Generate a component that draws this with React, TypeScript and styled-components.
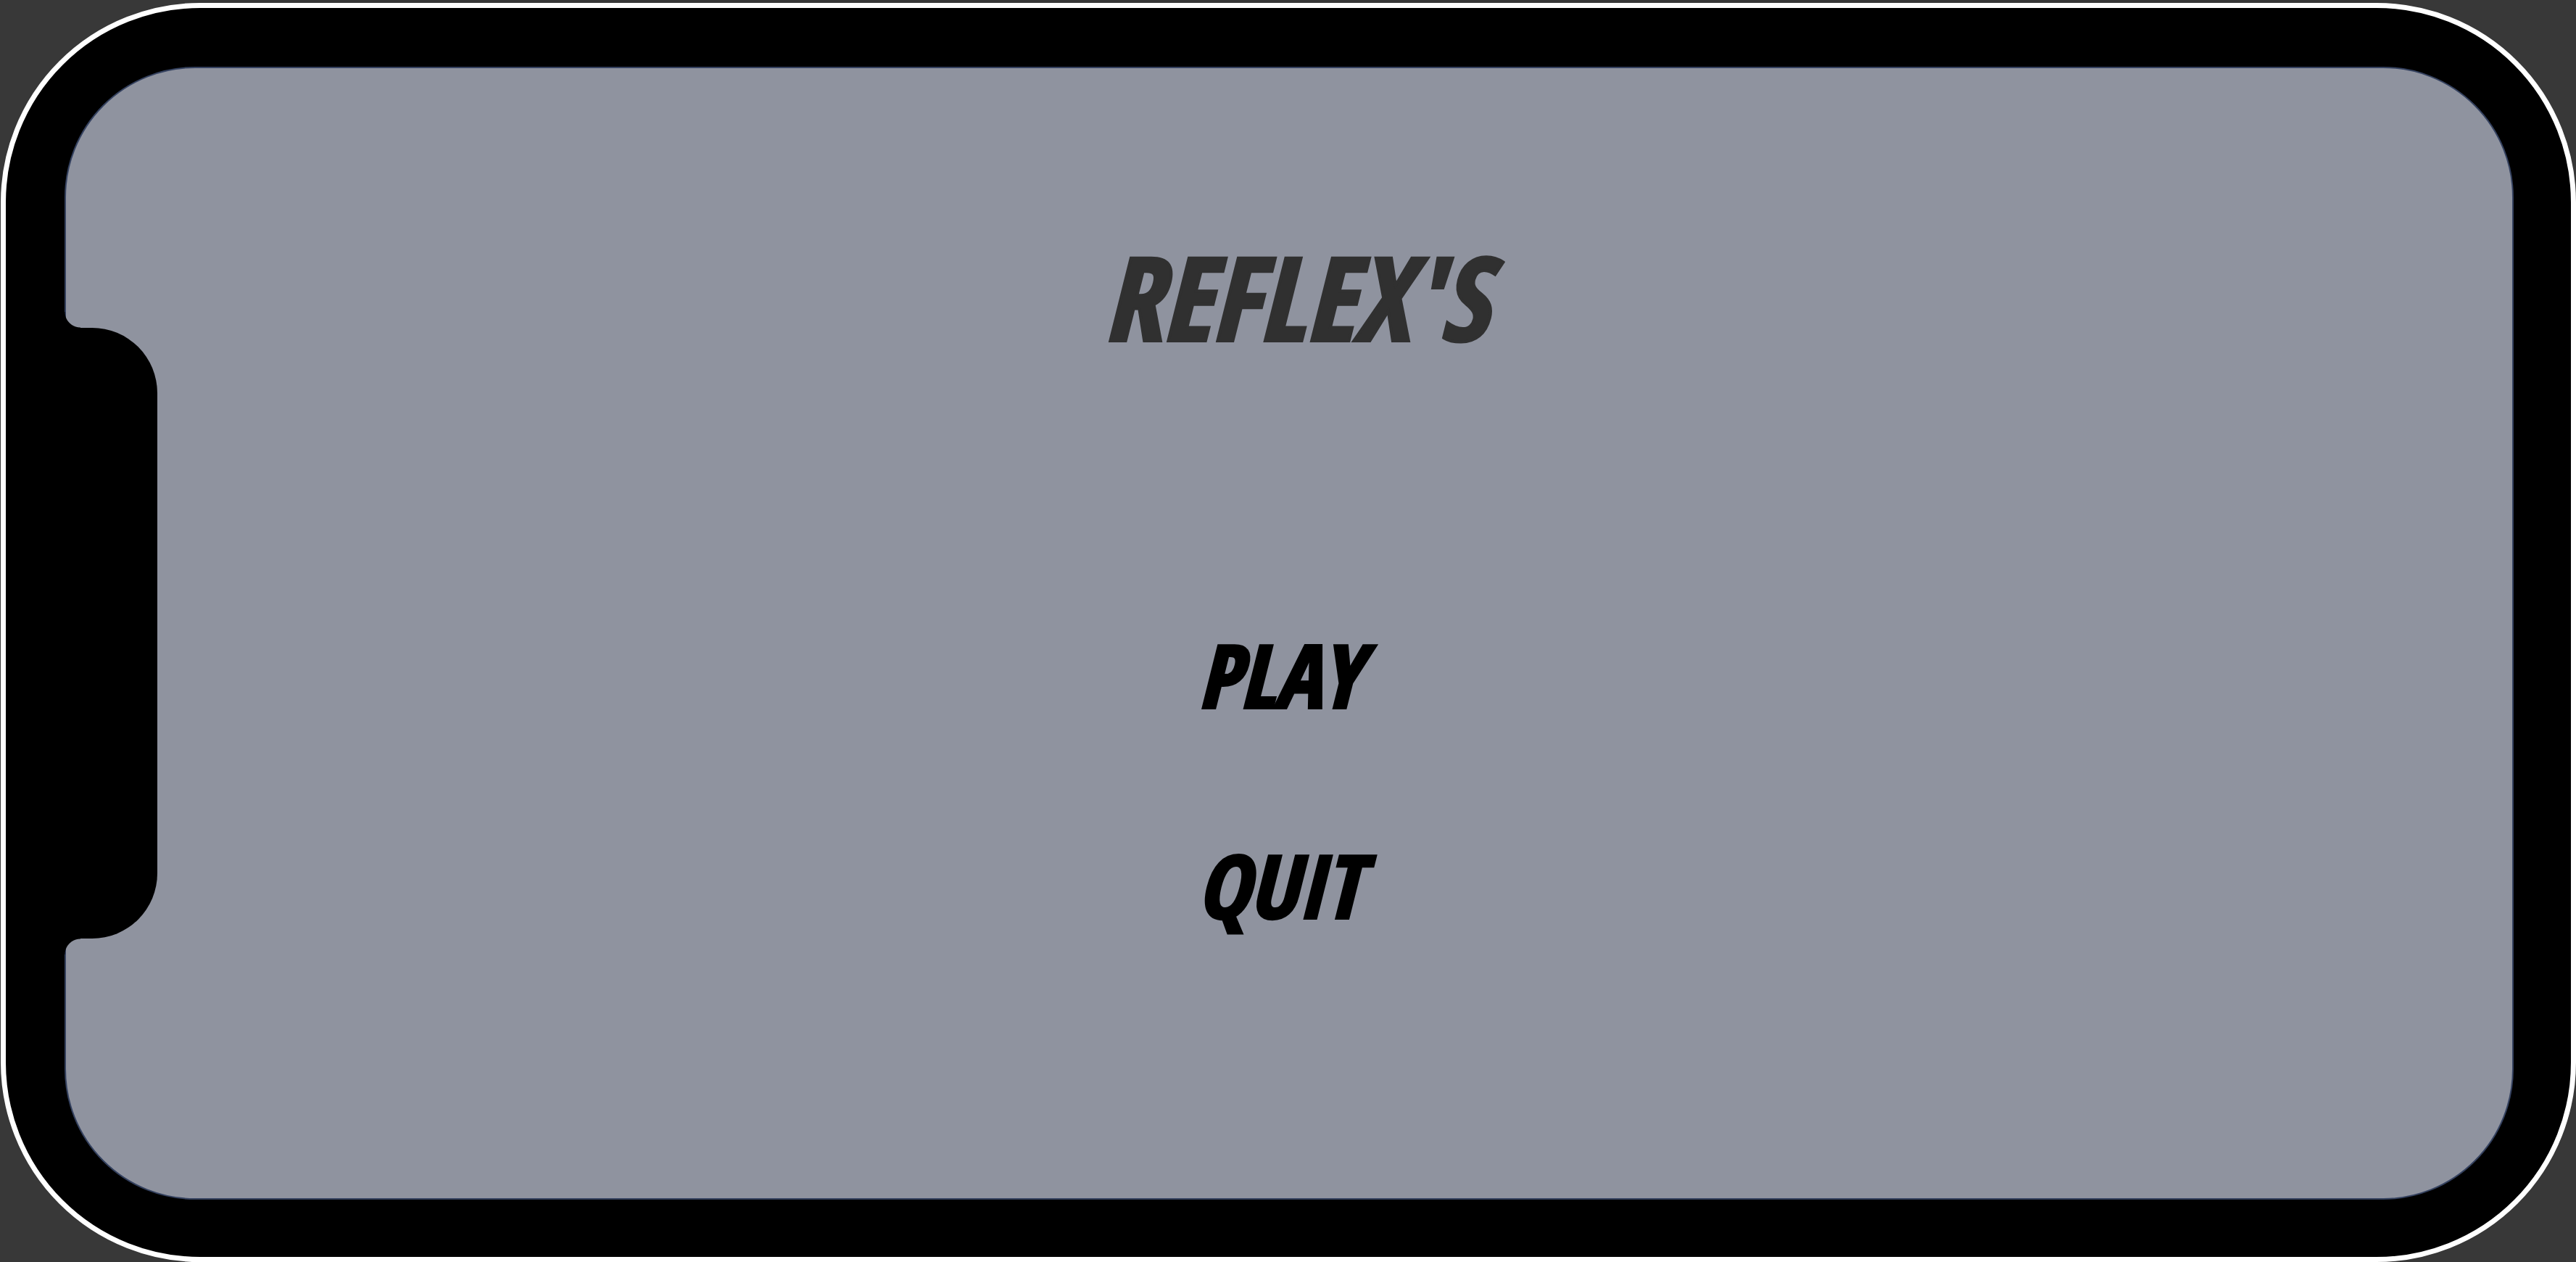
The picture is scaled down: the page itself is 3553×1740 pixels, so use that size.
import React from "react";
import styled, { createGlobalStyle } from "styled-components";

const colors = {
  backdrop: "#383838",
  bezel: "#000000",
  rim: "#ffffff",
  screen: "#8f939f",
  screenEdge: "#34415f",
  title: "#303030",
  action: "#000000",
};

const GlobalStyle = createGlobalStyle`
  *, *::before, *::after { box-sizing: border-box; }
  body { margin: 0; background: ${colors.backdrop}; }
`;

const Stage = styled.div`
  display: flex;
  height: 100vh;
  padding: 4px 0 0 1px;
  background: ${colors.backdrop};
`;

const Device = styled.div`
  flex: 1;
  display: flex;
  padding: 81px 79px 79px 81px;
  background: ${colors.bezel};
  border: 7px solid ${colors.rim};
  border-radius: 275px;
`;

const Screen = styled.main`
  flex: 1;
  display: grid;
  grid-template: 100% / 100%;
  background: ${colors.screen};
  border: 2px solid ${colors.screenEdge};
  border-radius: 180px;
`;

const Notch = styled.div`
  position: relative;
  grid-area: 1 / 1;
  align-self: center;
  width: 128px;
  height: 54%;
  margin-left: -2px;
  background: ${colors.bezel};
  border-radius: 0 90px 90px 0;

  /* Concave fillets where the notch meets the bezel */
  &::before,
  &::after {
    content: "";
    position: absolute;
    left: 0;
    width: 22px;
    height: 22px;
  }
  &::before {
    bottom: 100%;
    background: radial-gradient(circle at 100% 0, transparent 21px, ${colors.bezel} 22px);
  }
  &::after {
    top: 100%;
    background: radial-gradient(circle at 100% 100%, transparent 21px, ${colors.bezel} 22px);
  }
`;

const Menu = styled.div`
  grid-area: 1 / 1;
  display: flex;
  flex-direction: column;
  align-items: center;
  gap: 362px;
  padding: 214px 28px 0 0;
  font-family: "Open Sans Condensed", "Liberation Sans Narrow", "Open Sans", sans-serif;
  font-style: italic;
  font-weight: 700;
`;

const Title = styled.h1`
  margin: 0;
  padding-left: 44px;
  color: ${colors.title};
  font-size: 160px;
  font-weight: inherit;
  line-height: 200px;
  -webkit-text-stroke: 4px ${colors.title};
`;

const Actions = styled.nav`
  display: flex;
  flex-direction: column;
  align-items: center;
  gap: 170px;
`;

const ActionButton = styled.button`
  padding: 0;
  border: 0;
  background: none;
  color: ${colors.action};
  font: inherit;
  font-size: 120px;
  line-height: 120px;
  cursor: pointer;
  -webkit-text-stroke: 4px ${colors.action};
`;

export default function App() {
  return (
    <>
      <GlobalStyle />
      <Stage>
        <Device>
          <Screen>
            <Notch />
            <Menu>
              <Title>REFLEX'S</Title>
              <Actions>
                <ActionButton type="button">PLAY</ActionButton>
                <ActionButton type="button">QUIT</ActionButton>
              </Actions>
            </Menu>
          </Screen>
        </Device>
      </Stage>
    </>
  );
}
